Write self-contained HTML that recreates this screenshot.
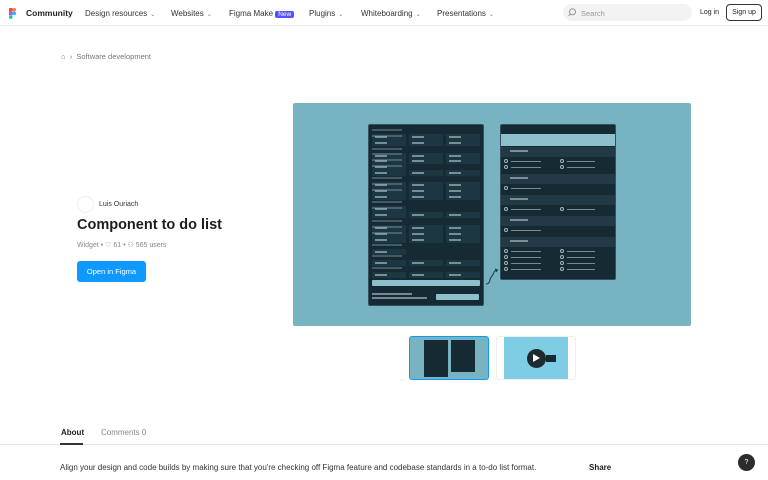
<!DOCTYPE html>
<html><head><meta charset="utf-8"><style>
*{margin:0;padding:0;box-sizing:border-box}
body{width:768px;height:480px;overflow:hidden;background:#fff;font-family:"Liberation Sans",sans-serif;color:#1e1e1e;position:relative}
.a{position:absolute}
.nav{font-size:8px;color:#333;top:9px}
.chev{font-size:6px;color:#777;margin-left:3px}
.p{background:#152a33;border:1px solid #33505c;border-radius:2px}
.r{position:absolute;height:6px;background:#1d3742}
.t{position:absolute;height:1.5px;background:#9fb3ba;opacity:.7}
</style></head><body>
<div class="a" style="left:0;top:0;width:768px;height:26px;border-bottom:1px solid #eee"></div>
<svg class="a" style="left:9px;top:8px" width="7" height="11" viewBox="0 0 7 11"><rect x="0" y="0" width="3.5" height="3.6" fill="#f24e1e"/><rect x="3.5" y="0" width="3.5" height="3.6" rx="1.7" fill="#ff7262"/><rect x="0" y="3.6" width="3.5" height="3.6" fill="#a259ff"/><circle cx="5.2" cy="5.4" r="1.8" fill="#1abcfe"/><rect x="0" y="7.2" width="3.5" height="3.6" rx="1.7" fill="#0acf83"/></svg>
<div class="a" style="left:26px;top:8px;font-size:8.5px;font-weight:bold">Community</div>
<div class="a nav" style="left:85px">Design resources<span class="chev">⌄</span></div>
<div class="a nav" style="left:171px">Websites<span class="chev">⌄</span></div>
<div class="a nav" style="left:229px">Figma Make <span style="background:#5551ff;color:#fff;font-size:6.5px;padding:0 3px;border-radius:2px">New</span></div>
<div class="a nav" style="left:309px">Plugins<span class="chev">⌄</span></div>
<div class="a nav" style="left:361px">Whiteboarding<span class="chev">⌄</span></div>
<div class="a nav" style="left:437px">Presentations<span class="chev">⌄</span></div>
<div class="a" style="left:563px;top:4px;width:129px;height:17px;background:#f3f3f3;border-radius:9px"></div>
<svg class="a" style="left:568px;top:8px" width="9" height="9" viewBox="0 0 9 9"><circle cx="4.5" cy="3.8" r="3" fill="none" stroke="#888" stroke-width=".9"/><line x1="2.4" y1="6" x2=".6" y2="8" stroke="#888" stroke-width=".9"/></svg>
<div class="a" style="left:581px;top:9px;font-size:7.5px;color:#999">Search</div>
<div class="a" style="left:700px;top:9px;font-size:7px">Log in</div>
<div class="a" style="left:726px;top:4px;width:36px;height:17px;border:1px solid #333;border-radius:4px;font-size:7px;text-align:center;line-height:15px">Sign up</div>

<div class="a" style="left:61px;top:52px;font-size:7.5px;color:#777">⌂ &nbsp;›&nbsp; Software development</div>

<div class="a" style="left:77px;top:196px;width:17px;height:17px;border-radius:50%;border:1px solid #eee"></div>
<div class="a" style="left:99px;top:201px;font-size:7px;color:#333">Luis Ouriach</div>
<div class="a" style="left:77px;top:217px;font-size:14.5px;font-weight:bold">Component to do list</div>
<div class="a" style="left:77px;top:241px;font-size:7px;color:#888">Widget • ♡ 61 • ⚇ 565 users</div>
<div class="a" style="left:77px;top:261px;width:69px;height:21px;background:#0d99ff;border-radius:3px;color:#fff;font-size:7.5px;text-align:center;line-height:21px">Open in Figma</div>

<div class="a" style="left:293px;top:103px;width:398px;height:223px;background:#78b3c1;border-radius:2px"></div>
<div class="a p" style="left:368px;top:124px;width:116px;height:182px"></div>
<div class="a" id="L" style="left:368px;top:124px;width:116px;height:182px"></div>
<div class="a" style="left:372px;top:280px;width:108px;height:6px;background:#8ec0cc;border-radius:1px"></div>
<div class="a" style="left:436px;top:294px;width:43px;height:6px;background:#8ec0cc;border-radius:1px"></div>
<div class="a t" style="left:372px;top:293px;width:40px;height:2px"></div>
<div class="a t" style="left:372px;top:297px;width:55px"></div>
<svg class="a" style="left:485px;top:268px" width="14" height="18"><path d="M1 16 C6 16 4 10 7 8 C9 6 8 3 12 2 M10 1 L12.5 2 L11 4" fill="none" stroke="#1d3440" stroke-width="1"/></svg>
<div class="a p" style="left:500px;top:124px;width:116px;height:156px"></div>
<div class="a" style="left:501px;top:134px;width:114px;height:12px;background:#8ec0cc"></div>
<div class="a" id="R" style="left:500px;top:124px;width:116px;height:156px"></div>

<div class="a" style="left:409px;top:336px;width:80px;height:44px;border:1.5px solid #0d99ff;border-radius:3px;background:#78b3c1"></div>
<div class="a" style="left:424px;top:340px;width:24px;height:37px;background:#152a33"></div>
<div class="a" style="left:451px;top:340px;width:24px;height:32px;background:#152a33"></div>
<div class="a" style="left:496px;top:336px;width:80px;height:44px;border:1px solid #eee;border-radius:3px;background:#fff"></div>
<div class="a" style="left:504px;top:337px;width:64px;height:42px;background:#7ecde5"></div>
<div class="a" style="left:527px;top:349px;width:19px;height:19px;border-radius:50%;background:#1e2a30"></div>
<div class="a" style="left:533px;top:354px;width:0;height:0;border-left:7px solid #fff;border-top:4.5px solid transparent;border-bottom:4.5px solid transparent"></div>
<div class="a" style="left:546px;top:355px;width:10px;height:7px;background:#152a33"></div>

<div class="a" style="left:0;top:444px;width:768px;height:1px;background:#e6e6e6"></div>
<div class="a" style="left:61px;top:428px;font-size:8px;font-weight:bold">About</div>
<div class="a" style="left:60px;top:443px;width:23px;height:2px;background:#333"></div>
<div class="a" style="left:101px;top:428px;font-size:8px;color:#888">Comments 0</div>
<div class="a" style="left:60px;top:463px;font-size:8px;color:#333">Align your design and code builds by making sure that you're checking off Figma feature and codebase standards in a to-do list format.</div>
<div class="a" style="left:589px;top:463px;font-size:8px;font-weight:bold">Share</div>
<div class="a" style="left:738px;top:454px;width:17px;height:17px;border-radius:50%;background:#2c2c2c;color:#fff;font-size:7px;text-align:center;line-height:17px">?</div>
<script>
var L=document.getElementById('L'),h='';
var ys=[8,15,30,37,44,51,65,72,79,93,100,115,122,129,143,157,171];
ys.forEach(function(y0,i){var y=Math.round(y0*0.85+2);h+='<div class="t" style="left:4px;top:'+(y-4)+'px;width:30px;opacity:.35"></div>';
for(var c=0;c<3;c++){if(i%5==4&&c>0)continue;h+='<div class="r" style="left:'+(4+c*37)+'px;top:'+(y+1)+'px;width:34px"></div><div class="t" style="left:'+(7+c*37)+'px;top:'+(y+3)+'px;width:12px"></div>';}});
L.innerHTML=h;
var R=document.getElementById('R');h='';
var y=23,sec=[2,1,1,1,4];
sec.forEach(function(n,k){h+='<div class="r" style="left:1px;top:'+y+'px;width:114px;height:10px;background:#213a45"></div><div class="t" style="left:10px;top:'+(y+3)+'px;width:18px"></div>';y+=12;
for(var i=0;i<n;i++){h+='<div style="position:absolute;left:4px;top:'+y+'px;width:4px;height:4px;border:1px solid #9fb3ba;border-radius:50%"></div><div class="t" style="left:11px;top:'+(y+1.5)+'px;width:30px"></div>';
if(k!=1&&k!=3)h+='<div style="position:absolute;left:60px;top:'+y+'px;width:4px;height:4px;border:1px solid #9fb3ba;border-radius:50%"></div><div class="t" style="left:67px;top:'+(y+1.5)+'px;width:28px"></div>';y+=6;}y+=3;});
R.innerHTML=h;
</script>
</body></html>
